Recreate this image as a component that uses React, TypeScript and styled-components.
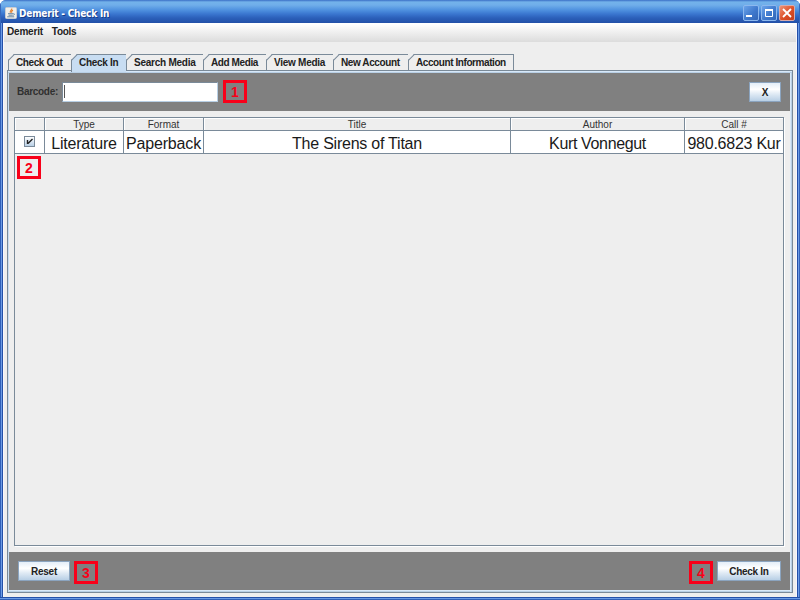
import React from "react";
import styled, { createGlobalStyle, css } from "styled-components";

const GlobalStyle = createGlobalStyle`
  * { box-sizing: border-box; }
  body { margin: 0; background: #fff; font-family: "Liberation Sans", Arial, sans-serif; overflow: hidden; }
`;

const Window = styled.div`
  width: 800px;
  height: 600px;
  display: flex;
  flex-direction: column;
  padding: 0 3px 3px;
  border-radius: 6px 6px 0 0;
  overflow: hidden;
  background: linear-gradient(to right, #2f5fb8 0 1px, #6b9be6 1px 2px, #2450a8 2px 3px, #3a6cc4 3px 797px, #2450a8 797px 798px, #6b9be6 798px 799px, #3564ba 799px);
`;

const TitleBar = styled.header`
  flex: 0 0 23px;
  margin: 0 -3px;
  padding: 2px 4px 0 4px;
  display: flex;
  align-items: center;
  background: linear-gradient(#3a6fc6 0, #73b2ea 2px, #70aeea 5px, #4f91df 10px, #3a76cf 14px, #2b5fb9 18px, #2250a8 23px);
  border-left: 1px solid #3769bd;
  border-right: 1px solid #3769bd;
`;

const Title = styled.h1<{ $ls: number }>`
  flex: 1;
  margin: 2px 0 0 2px;
  font: bold 10px/14px "DejaVu Sans Condensed", "DejaVu Sans", sans-serif;
  letter-spacing: ${(p) => p.$ls}px;
  color: #fff;
  text-shadow: 1px 1px 0 #193d88;
`;

const WindowButton = styled.button<{ $close?: boolean }>`
  width: 16px;
  height: 16px;
  margin: 1px 0 0 2px;
  padding: 0;
  border: 1px solid ${(p) => (p.$close ? "#d9aaa9" : "#8cb8ee")};
  border-radius: 2px;
  background: ${(p) => (p.$close ? "linear-gradient(135deg, #ee9376, #dc4e25 55%, #c43d1c)" : "linear-gradient(135deg, #6aa3e9, #3f79cd 55%, #3266b7)")};
  svg { display: block; }
`;

const Client = styled.main`
  flex: 1;
  min-height: 0;
  display: flex;
  flex-direction: column;
  background: #eee;
  border: solid #f7f7fb;
  border-width: 0 1px 1px;
  margin-bottom: -1px;
`;

const BottomFrame = styled.div`
  flex: 0 0 3px;
  margin: 0 -3px -3px;
  background: linear-gradient(#2450a8 0 1px, #6b9be6 1px 2px, #3060b6 2px);
  z-index: 1;
`;

const MenuBar = styled.nav`
  flex: 0 0 19px;
  display: flex;
  align-items: center;
  gap: 9px;
  padding: 0 0 2px 3px;
  border-top: 1px solid #fff;
  background: linear-gradient(#fff, #dcdcdc);
`;

const Label = styled.span<{ $ls?: number; $w?: number; $dim?: boolean }>`
  font: bold 10px/12px "Liberation Sans", Arial, sans-serif;
  color: ${(p) => (p.$dim ? "#303030" : "#222")};
  letter-spacing: ${(p) => p.$ls ?? 0}px;
  white-space: nowrap;
  ${(p) => p.$w && css`width: ${p.$w}px;`}
`;

const Tabs = styled.div`
  display: flex;
  margin: 12px 0 0 4px;
  height: 16px;
`;

const Tab = styled.div<{ $w: number; $active?: boolean; $last?: boolean }>`
  position: relative;
  flex: 0 0 ${(p) => p.$w}px;
  height: ${(p) => (p.$active ? 18 : 16)}px;
  padding: 2px 0 0 7px;
  line-height: 12px;
  display: flex;
  background: ${(p) => (p.$active ? "#c8ddf2" : "#eee")};
  clip-path: polygon(0 6px, 6px 0, 100% 0, 100% 100%, 0 100%);
  border-top: 1px solid #7a8a99;
  border-left: 1px solid #7a8a99;
  ${(p) => p.$last && css`border-right: 1px solid #7a8a99;`}
  z-index: ${(p) => (p.$active ? 1 : 0)};
`;

const Slant = styled.svg`
  position: absolute;
  left: -1px;
  top: -1px;
`;

const Pane = styled.section`
  flex: 1;
  min-height: 0;
  margin: 0 3px 4px;
  display: flex;
  flex-direction: column;
  border: 1px solid #7a8a99;
  box-shadow: inset 0 1px 0 #d8e8f8, inset 0 2px 0 #b8cfe5, inset 1px 0 0 #c8ddf2, inset -1px 0 0 #b8cfe5, inset -2px 0 0 #d8e8f8, inset 0 -1px 0 #b8cfe5, inset 0 -2px 0 #d8e8f8;
  padding: 2px 2px 2px 1px;
`;

const Bar = styled.div`
  flex: 0 0 38px;
  display: flex;
  align-items: flex-start;
  padding: 9px 9px 0;
  background: #808080;
  & > ${Label} { margin: 4px 0 0 -1px; }
`;

const Field = styled.input`
  width: 156px;
  height: 20px;
  padding: 0;
  border: 1px solid #7a8a99;
  border-right-color: #b8cfe5;
  border-bottom-color: #b8cfe5;
  outline: none;
  background: linear-gradient(#555, #555) 1px 2px / 1px 13px no-repeat #fff;
`;

const Button = styled.button<{ $w: number }>`
  width: ${(p) => p.$w}px;
  height: 20px;
  padding: 2px 0 0;
  display: flex;
  align-items: center;
  justify-content: center;
  border: 1px solid #8ba4bf;
  background: linear-gradient(#e4eef8, #fff 35%, #e1ebf5 60%, #b8cfe5);
`;

const Marker = styled.span<{ $t?: number; $l?: number; $r?: number; $float?: boolean }>`
  width: 24px;
  height: 23px;
  margin: ${(p) => p.$t ?? 0}px ${(p) => p.$r ?? 0}px 0 ${(p) => p.$l ?? 0}px;
  padding-top: 1px;
  display: flex;
  align-items: center;
  justify-content: center;
  border: 3px solid #f80019;
  font: bold 14px/16px "Liberation Sans", Arial, sans-serif;
  color: #f80019;
  ${(p) => p.$float && css`position: absolute; left: 2px; top: 38px;`}
`;

const Spacer = styled.div`
  flex: 1;
`;

const TableArea = styled.div`
  position: relative;
  flex: 1;
  min-height: 0;
  margin: 6px 6px 6px 5px;
  border: 1px solid #7a8a99;
  box-shadow: 1px 1px 0 #fff;
  background: #eee;
`;

const GridRow = styled.div<{ $head?: boolean }>`
  display: grid;
  grid-template-columns: 30px 79px 80px 307px 174px 1fr;
  height: ${(p) => (p.$head ? 13 : 23)}px;
  background: ${(p) => (p.$head ? "#eee" : "#fff")};
  border-bottom: 1px solid #7a8a99;
`;

const Cell = styled.div<{ $head?: boolean; $ls?: number }>`
  display: flex;
  align-items: center;
  justify-content: center;
  overflow: hidden;
  white-space: nowrap;
  border-right: 1px solid #7a8a99;
  &:last-child { border-right: 0; }
  font-size: ${(p) => (p.$head ? 10 : 16)}px;
  line-height: ${(p) => (p.$head ? 12 : 20)}px;
  color: ${(p) => (p.$head ? "#333" : "#1a1a1a")};
  letter-spacing: ${(p) => p.$ls ?? 0}px;
  padding-top: ${(p) => (p.$head ? 2 : 3)}px;
  ${(p) => p.$head && css`box-shadow: inset 1px 1px 0 #fff;`}
`;

const CheckBox = styled.span`
  width: 11px;
  height: 11px;
  margin-top: -4px;
  border: 1px solid #7a8a99;
  background: linear-gradient(#fff, #b8cfe5);
  svg { display: block; }
`;

const tabs = [
  { text: "Check Out", w: 63, ls: -0.4 },
  { text: "Check In", w: 55, ls: -0.3 },
  { text: "Search Media", w: 77, ls: -0.25 },
  { text: "Add Media", w: 63, ls: -0.4 },
  { text: "View Media", w: 67, ls: -0.26 },
  { text: "New Account", w: 75, ls: -0.4 },
  { text: "Account Information", w: 106, ls: -0.42 },
];

const heads = ["", "Type", "Format", "Title", "Author", "Call #"];
const record = [
  { text: "Literature", ls: -0.22 },
  { text: "Paperback", ls: -0.15 },
  { text: "The Sirens of Titan", ls: -0.23 },
  { text: "Kurt Vonnegut", ls: -0.35 },
  { text: "980.6823 Kur", ls: -0.25 },
];

const JavaIcon = () => (
  <svg width="12" height="12" viewBox="0 0 12 12">
    <rect x="0.5" y="0.5" width="11" height="11" rx="1" fill="#f2efe9" stroke="#c9cdd2" />
    <path d="M6.7 1.5C7.2 3 4.3 3.5 5.4 5.8M8 3C6.5 3.8 6.2 4.4 6.8 5.8" fill="none" stroke="#e8812c" strokeWidth="1.1" />
    <path d="M3 6.7h5.2M3.6 8.2h4.2M2.2 9.8h7M8.4 6.6c1.5-.2 1.2 1.4-.2 1.7" fill="none" stroke="#587a9b" strokeWidth="0.9" />
  </svg>
);

export default function App() {
  return (
    <>
      <GlobalStyle />
      <Window>
        <TitleBar>
          <JavaIcon />
          <Title $ls={-0.22}>Demerit - Check In</Title>
          <WindowButton aria-label="Minimize">
            <svg width="14" height="14"><rect x="2" y="9" width="6" height="2" fill="#fff" /></svg>
          </WindowButton>
          <WindowButton aria-label="Maximize">
            <svg width="14" height="14"><path d="M3.5 3v7.5h7V3" fill="none" stroke="#fff" /><path d="M3 3h8v2H3z" fill="#fff" /></svg>
          </WindowButton>
          <WindowButton $close aria-label="Close">
            <svg width="14" height="14"><path d="M3 3l8 8M11 3l-8 8" stroke="#fff" strokeWidth="1.8" /></svg>
          </WindowButton>
        </TitleBar>
        <Client>
          <MenuBar>
            <Label $ls={-0.2}>Demerit</Label>
            <Label $ls={-0.3}>Tools</Label>
          </MenuBar>
          <Tabs>
            {tabs.map((t, i) => (
              <Tab key={t.text} $w={t.w} $active={i === 1} $last={i === tabs.length - 1}>
                <Slant width="8" height="8"><path d="M0 6.5L6.5 0" stroke="#7a8a99" strokeWidth="1.4" /></Slant>
                <Label $ls={t.ls}>{t.text}</Label>
              </Tab>
            ))}
          </Tabs>
          <Pane>
            <Bar>
              <Label $ls={-0.3} $w={45} $dim>Barcode:</Label>
              <Field aria-label="Barcode" />
              <Marker $t={-2} $l={5}>1</Marker>
              <Spacer />
              <Button $w={32}><Label>X</Label></Button>
            </Bar>
            <TableArea>
              <GridRow $head>
                {heads.map((h) => <Cell key={h} $head>{h}</Cell>)}
              </GridRow>
              <GridRow>
                <Cell>
                  <CheckBox>
                    <svg width="9" height="9"><path d="M2.5 3v4M3 6.5L7.5 2" fill="none" stroke="#222" strokeWidth="1.4" /></svg>
                  </CheckBox>
                </Cell>
                {record.map((c) => <Cell key={c.text} $ls={c.ls}>{c.text}</Cell>)}
              </GridRow>
              <Marker $float>2</Marker>
            </TableArea>
            <Bar>
              <Button $w={52}><Label $ls={-0.2}>Reset</Label></Button>
              <Marker $l={4}>3</Marker>
              <Spacer />
              <Marker $r={4}>4</Marker>
              <Button $w={64}><Label $ls={-0.3}>Check In</Label></Button>
            </Bar>
          </Pane>
        </Client>
        <BottomFrame />
      </Window>
    </>
  );
}
